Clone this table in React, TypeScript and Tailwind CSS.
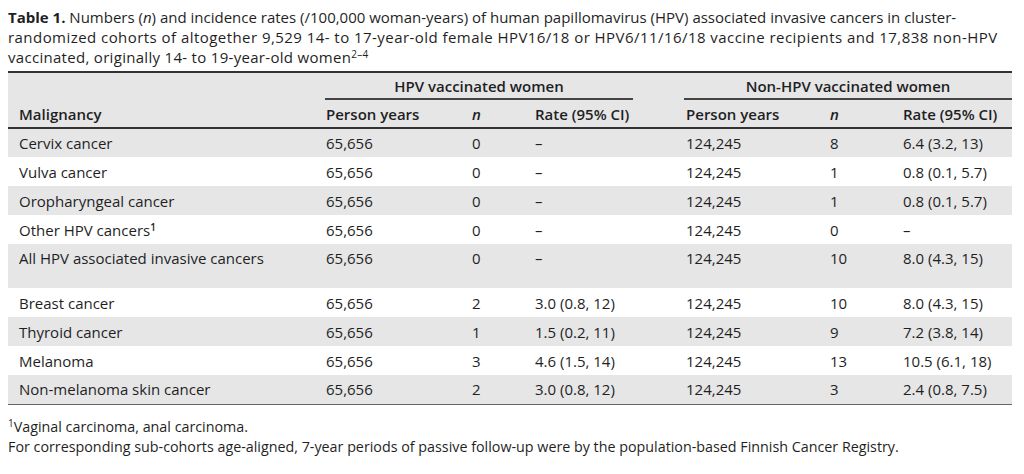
import React from "react";

type Row = {
  name: React.ReactNode;
  n1: string;
  rate1: string;
  n2: string;
  rate2: string;
  tall?: boolean;
};

const rows: Row[] = [
  { name: "Cervix cancer", n1: "0", rate1: "–", n2: "8", rate2: "6.4 (3.2, 13)" },
  { name: "Vulva cancer", n1: "0", rate1: "–", n2: "1", rate2: "0.8 (0.1, 5.7)" },
  { name: "Oropharyngeal cancer", n1: "0", rate1: "–", n2: "1", rate2: "0.8 (0.1, 5.7)" },
  {
    name: (
      <>
        Other HPV cancers<sup className="text-[10px] font-semibold">1</sup>
      </>
    ),
    n1: "0",
    rate1: "–",
    n2: "0",
    rate2: "–",
  },
  { name: "All HPV associated invasive cancers", n1: "0", rate1: "–", n2: "10", rate2: "8.0 (4.3, 15)", tall: true },
  { name: "Breast cancer", n1: "2", rate1: "3.0 (0.8, 12)", n2: "10", rate2: "8.0 (4.3, 15)" },
  { name: "Thyroid cancer", n1: "1", rate1: "1.5 (0.2, 11)", n2: "9", rate2: "7.2 (3.8, 14)" },
  { name: "Melanoma", n1: "3", rate1: "4.6 (1.5, 14)", n2: "13", rate2: "10.5 (6.1, 18)" },
  { name: "Non-melanoma skin cancer", n1: "2", rate1: "3.0 (0.8, 12)", n2: "3", rate2: "2.4 (0.8, 7.5)" },
];

export default function App() {
  return (
    <div className="w-[1024px] h-[474px] bg-white text-[#1f1f1f] text-[15px] leading-[20px] font-['Open_Sans',sans-serif] overflow-hidden">
      {/* Caption */}
      <div className="pt-[7px] px-[8px] whitespace-nowrap">
        <p>
          <span className="font-bold">Table 1.</span> Numbers (<i>n</i>) and incidence rates (/100,000 woman-years) of
          human papillomavirus (HPV) associated invasive cancers in cluster-
        </p>
        <p className="tracking-[0.45px]">
          randomized cohorts of altogether 9,529 14- to 17-year-old female HPV16/18 or HPV6/11/16/18 vaccine recipients
          and 17,838 non-HPV
        </p>
        <p className="tracking-[0.3px]">
          vaccinated, originally 14- to 19-year-old women<sup className="text-[10px]">2–4</sup>
        </p>
      </div>

      {/* Table */}
      <table className="mt-[4px] ml-[8px] w-[1004px] table-fixed border-collapse">
        <colgroup>
          <col className="w-[318px]" />
          <col className="w-[146px]" />
          <col className="w-[63px]" />
          <col className="w-[151px]" />
          <col className="w-[144px]" />
          <col className="w-[73px]" />
          <col className="w-[109px]" />
        </colgroup>
        <thead className="bg-[#e6e6e7] font-semibold">
          <tr className="border-t-2 border-[#333] h-[28px]">
            <td className="p-0" />
            <td colSpan={3} className="p-0 align-bottom">
              <div className="w-[308px] -ml-px text-center border-b-2 border-[#444] pb-[2px]">
                HPV vaccinated women
              </div>
            </td>
            <td colSpan={3} className="p-0 align-bottom">
              <div className="w-[328px] -ml-[2px] text-center border-b-2 border-[#444] pb-[2px]">
                Non-HPV vaccinated women
              </div>
            </td>
          </tr>
          <tr className="border-b-2 border-[#333] h-[28px] text-left">
            <th className="pl-[11px] font-semibold">Malignancy</th>
            <th className="font-semibold">Person years</th>
            <th className="font-semibold italic">n</th>
            <th className="font-semibold">Rate (95% CI)</th>
            <th className="font-semibold">Person years</th>
            <th className="font-semibold italic">n</th>
            <th className="font-semibold">Rate (95% CI)</th>
          </tr>
        </thead>
        <tbody className="border-b border-[#666]">
          {rows.map((r, i) => (
            <tr key={i} className={`${i % 2 === 0 ? "bg-[#e6e6e7]" : "bg-white"} ${r.tall ? "h-[44px]" : "h-[29px]"}`}>
              <td className={`pl-[11px] ${r.tall ? "align-top pt-[4px]" : ""}`}>{r.name}</td>
              <td className={r.tall ? "align-top pt-[4px]" : ""}>65,656</td>
              <td className={r.tall ? "align-top pt-[4px]" : ""}>{r.n1}</td>
              <td className={r.tall ? "align-top pt-[4px]" : ""}>{r.rate1}</td>
              <td className={r.tall ? "align-top pt-[4px]" : ""}>124,245</td>
              <td className={r.tall ? "align-top pt-[4px]" : ""}>{r.n2}</td>
              <td className={r.tall ? "align-top pt-[4px]" : ""}>{r.rate2}</td>
            </tr>
          ))}
        </tbody>
      </table>

      {/* Footnotes */}
      <div className="mt-[12px] px-[8px] text-[14.3px]">
        <p>
          <sup className="text-[10px]">1</sup>Vaginal carcinoma, anal carcinoma.
        </p>
        <p>
          For corresponding sub-cohorts age-aligned, 7-year periods of passive follow-up were by the population-based
          Finnish Cancer Registry.
        </p>
      </div>
    </div>
  );
}
